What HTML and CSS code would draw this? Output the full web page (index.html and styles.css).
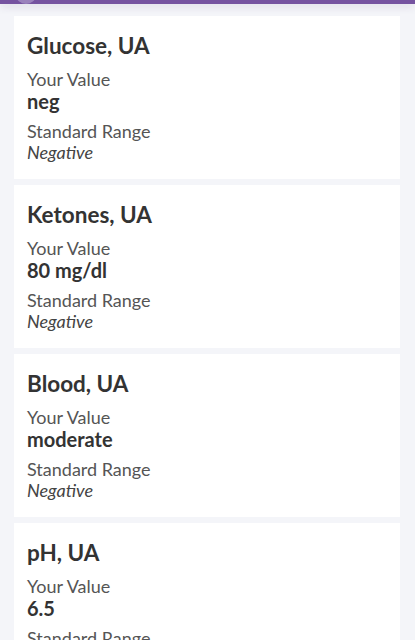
FILE: index.html
```html
<!DOCTYPE html>
<html lang="en">
<head>
<meta charset="utf-8">
<link rel="stylesheet" href="styles.css">
</head>
<body>
<header class="topbar"><span class="avatar"></span></header>
<main class="results">
  <section class="card">
    <h2 class="title">Glucose, UA</h2>
    <div class="field">
      <div class="label">Your Value</div>
      <div class="value">neg</div>
    </div>
    <div class="field">
      <div class="label">Standard Range</div>
      <div class="range">Negative</div>
    </div>
  </section>
  <section class="card">
    <h2 class="title">Ketones, UA</h2>
    <div class="field">
      <div class="label">Your Value</div>
      <div class="value">80 mg/dl</div>
    </div>
    <div class="field">
      <div class="label">Standard Range</div>
      <div class="range">Negative</div>
    </div>
  </section>
  <section class="card">
    <h2 class="title">Blood, UA</h2>
    <div class="field">
      <div class="label">Your Value</div>
      <div class="value">moderate</div>
    </div>
    <div class="field">
      <div class="label">Standard Range</div>
      <div class="range">Negative</div>
    </div>
  </section>
  <section class="card">
    <h2 class="title">pH, UA</h2>
    <div class="field">
      <div class="label">Your Value</div>
      <div class="value">6.5</div>
    </div>
    <div class="field">
      <div class="label">Standard Range</div>
      <div class="range">5.0 - 8.0</div>
    </div>
  </section>
</main>
</body>
</html>
```

FILE: styles.css
```css
* { box-sizing: border-box; }
html, body { margin: 0; padding: 0; }
body {
  background: #f4f5f9;
  font-family: "Lato", "Liberation Sans", sans-serif;
  color: #333;
  overflow: hidden;
  height: 640px;
}
.topbar {
  height: 4px;
  background: #7553a0;
  box-shadow: 0 2px 8px rgba(60, 40, 100, 0.18);
  position: relative;
  overflow: hidden;
}
.avatar {
  position: absolute;
  left: 16px;
  top: -14px;
  width: 20px;
  height: 18px;
  border-radius: 50%;
  background: #9a82bc;
}
.results {
  padding: 12px 15px 0 14px;
  display: flex;
  flex-direction: column;
  gap: 6px;
}
.card {
  background: #fff;
  padding: 15px 13px 17px;
  height: 163px;
  flex-shrink: 0;
}
.title {
  margin: 0 0 8px;
  font-size: 22.5px;
  line-height: 30px;
  font-weight: 700;
  color: #333;
}
.field { margin-bottom: 9px; }
.label {
  font-size: 18px;
  line-height: 21px;
  color: #555;
}
.value {
  font-size: 20px;
  line-height: 22px;
  font-weight: 700;
  color: #333;
}
.range {
  font-size: 18px;
  line-height: 21px;
  font-style: italic;
  color: #444;
}
```
